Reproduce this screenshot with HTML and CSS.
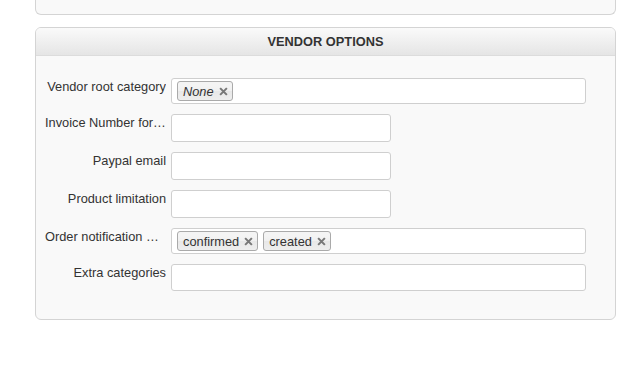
FILE: index.html
```html
<!DOCTYPE html>
<html lang="en">
<head>
  <meta charset="UTF-8" />
  <title>Vendor options</title>
  <link rel="stylesheet" href="styles.css">
</head>
<body>
  <div class="page">
    <div class="panel panel-prev"></div>

    <section class="panel">
      <h2 class="panel-title">VENDOR OPTIONS</h2>
      <div class="form">
        <div class="row">
          <label>Vendor root category</label>
          <div class="select2 wide">
            <span class="tag"><em>None</em><svg class="x" viewBox="0 0 8 8"><path d="M1 1l6 6M7 1l-6 6"/></svg></span>
          </div>
        </div>
        <div class="row">
          <label>Invoice Number format</label>
          <input class="text" type="text">
        </div>
        <div class="row">
          <label>Paypal email</label>
          <input class="text" type="text">
        </div>
        <div class="row">
          <label>Product limitation</label>
          <input class="text" type="text">
        </div>
        <div class="row">
          <label>Order notification mails</label>
          <div class="select2 wide">
            <span class="tag">confirmed<svg class="x" viewBox="0 0 8 8"><path d="M1 1l6 6M7 1l-6 6"/></svg></span>
            <span class="tag">created<svg class="x" viewBox="0 0 8 8"><path d="M1 1l6 6M7 1l-6 6"/></svg></span>
          </div>
        </div>
        <div class="row">
          <label>Extra categories</label>
          <div class="select2 wide empty"></div>
        </div>
      </div>
    </section>
  </div>
</body>
</html>
```

FILE: styles.css
```css
* {
  box-sizing: border-box;
}

body {
  margin: 0;
  background: #fff;
  color: #333;
  font-family: "Liberation Sans", Arial, sans-serif;
  font-size: 12.8px;
}

.page {
  width: 581px;
  margin-left: 35px;
}

.panel {
  background: #f9f9f9;
  border: 1px solid #d4d4d4;
  border-radius: 6px;
}

.panel-prev {
  height: 15px;
  border-top: 0;
  border-radius: 0 0 6px 6px;
  margin-bottom: 12px;
}

.panel-title {
  margin: 0;
  height: 28px;
  line-height: 27px;
  font-size: 12.8px;
  font-weight: 700;
  text-align: center;
  color: #333;
  background: linear-gradient(#fafafa, #e5e5e5);
  border-bottom: 1px solid #dcdcdc;
  border-radius: 5px 5px 0 0;
}

.form {
  display: flex;
  flex-direction: column;
  gap: 10px;
  padding: 22px 29px 28px 9px;
}

.row {
  display: grid;
  grid-template-columns: 121px 1fr;
  column-gap: 5px;
  align-items: start;
}

.row label {
  text-align: right;
  line-height: 18px;
  white-space: nowrap;
  overflow: hidden;
  text-overflow: ellipsis;
}

.text {
  width: 220px;
  height: 28px;
  margin: 0;
  border: 1px solid #cfcfcf;
  border-radius: 3px;
  background: #fff;
}

.select2 {
  display: flex;
  gap: 5px;
  height: 26px;
  padding: 2px 5px;
  border: 1px solid #cfcfcf;
  border-radius: 3px;
  background: #fff;
}

.select2.empty {
  height: 27px;
}

.tag {
  display: inline-flex;
  align-items: center;
  gap: 5px;
  height: 20px;
  padding: 0 4px 0 5px;
  border: 1px solid #aaa;
  border-radius: 3px;
  background: linear-gradient(#f4f4f4 20%, #f0f0f0 50%, #e8e8e8 52%, #eee 100%);
  color: #333;
}

.tag em {
  font-style: italic;
}

.x {
  width: 9px;
  height: 9px;
  stroke: #777;
  stroke-width: 1.8;
  fill: none;
}
```
